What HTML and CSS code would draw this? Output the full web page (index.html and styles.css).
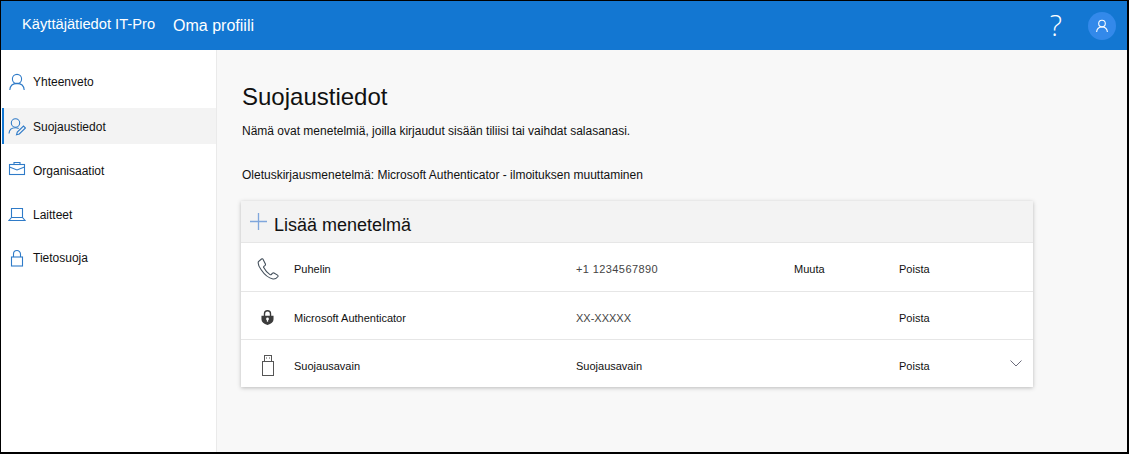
FILE: index.html
```html
<!DOCTYPE html>
<html>
<head>
  <title>Oma profiili</title>
  <link rel="stylesheet" href="styles.css">
</head>
<body>
  <div class="page">
    <header class="topbar">
      <span class="org">Käyttäjätiedot IT-Pro</span>
      <span class="app">Oma profiili</span>
      <span class="help">?</span>
      <span class="avatar">
        <svg width="14" height="14" viewBox="0 0 14 14" fill="none" stroke="#fff" stroke-width="1.1"><circle cx="7" cy="4.6" r="3.3"/><path d="M1.6 13c.3-3 2.4-5 5.4-5s5.100 2 5.400 5"/></svg>
      </span>
    </header>
    <div class="main">
      <nav class="sidebar">
        <a class="nav-item">
          <svg class="nav-icon" width="18" height="18" viewBox="0 0 18 18" fill="none" stroke="#2f7bc8" stroke-width="1.1"><circle cx="9" cy="6" r="4.600"/><path d="M1.800 17c.3-4 3.200-6.600 7.200-6.600s6.900 2.600 7.200 6.600"/></svg>
          <span>Yhteenveto</span>
        </a>
        <a class="nav-item active">
          <svg class="nav-icon" width="18" height="18" viewBox="0 0 18 18" fill="none" stroke="#2f7bc8" stroke-width="1.1"><circle cx="7.500" cy="5" r="4.200"/><path d="M1 15.500c.2-3.300 2.600-5.800 6.500-5.800 1.300 0 2.300.3 3.200.8"/><path d="M8.500 16.800l.8-2.800 6.200-6 2 2-6.200 6z"/></svg>
          <span>Suojaustiedot</span>
        </a>
        <a class="nav-item org-item">
          <svg class="nav-icon" width="18" height="18" viewBox="0 0 18 18" fill="none" stroke="#2f7bc8" stroke-width="1.1"><rect x="1.500" y="2.500" width="15" height="10"/><path d="M6 2.500V.5h6v2M1.500 5l7.500 3 7.500-3"/></svg>
          <span>Organisaatiot</span>
        </a>
        <a class="nav-item">
          <svg class="nav-icon" width="18" height="18" viewBox="0 0 18 18" fill="none" stroke="#2f7bc8" stroke-width="1.1"><path d="M3.500 2.500h11v9h-11zM3.500 11.500L1 14.500h16l-2.500-3"/></svg>
          <span>Laitteet</span>
        </a>
        <a class="nav-item">
          <svg class="nav-icon" width="18" height="18" viewBox="0 0 18 18" fill="none" stroke="#2f7bc8" stroke-width="1.1"><rect x="3.500" y="8" width="11" height="9"/><path d="M5.500 8V5a3.500 3.500 0 0 1 7 0v3"/></svg>
          <span>Tietosuoja</span>
        </a>
      </nav>
      <main class="content">
        <h1>Suojaustiedot</h1>
        <p class="intro">Nämä ovat menetelmiä, joilla kirjaudut sisään tiliisi tai vaihdat salasanasi.</p>
        <p class="default-method">Oletuskirjausmenetelmä: Microsoft Authenticator - ilmoituksen muuttaminen</p>
        <section class="card">
          <div class="add-row">
            <svg class="plus" width="17" height="17" viewBox="0 0 17 17" stroke="#7fa6dc" stroke-width="1.300"><path d="M8.500 0v17M0 8.500h17"/></svg>
            <span>Lisää menetelmä</span>
          </div>
          <div class="method">
            <span class="method-icon">
              <svg width="22" height="22" viewBox="0 0 22 22" fill="none" stroke="#44505c" stroke-width="1.100"><path d="M4.500 1L1.500 3.500C.8 5 1.500 8 4 11.500c3 4.500 7 8.500 12 9.500 2 .3 3.500-.5 5-2.500 .3-.6 0-1-.5-1.400l-3.500-2.100c-.6-.3-1-.2-1.400.2l-1.300 1.300c-.4.4-.8.4-1.300.1-2.500-1.500-5-4.500-6.300-7-.2-.5-.2-.9.2-1.300l1.200-1c.4-.4.5-.8.300-1.300L6 1.300C5.700.7 5 .6 4.500 1z"/></svg>
            </span>
            <span class="method-name">Puhelin</span>
            <span class="method-value number">+1 1234567890</span>
            <span class="method-change">Muuta</span>
            <span class="method-delete">Poista</span>
          </div>
          <div class="method">
            <span class="method-icon">
              <svg width="13" height="15" viewBox="0 0 14 16"><path fill="#3c3c3c" d="M7 0a4 4 0 0 1 4 4v2h2.500v4c0 3-2.500 5-6.500 6-4-1-6.500-3-6.500-6V6H3V4a4 4 0 0 1 4-4zm0 1.500A2.500 2.500 0 0 0 4.500 4v2h5V4A2.500 2.500 0 0 0 7 1.500z"/><circle cx="7" cy="9.500" r="1.500" fill="#fff"/><rect x="6.300" y="10" width="1.400" height="2.500" fill="#fff"/></svg>
            </span>
            <span class="method-name">Microsoft Authenticator</span>
            <span class="method-value code">XX-XXXXX</span>
            <span class="method-change"></span>
            <span class="method-delete">Poista</span>
          </div>
          <div class="method">
            <span class="method-icon">
              <svg width="12" height="21" viewBox="0 0 12 21" fill="none" stroke="#555" stroke-width="1"><rect x="2.500" y=".500" width="7" height="6"/><rect x=".500" y="6.500" width="11" height="14"/><path d="M4 3h1M7 3h1"/></svg>
            </span>
            <span class="method-name">Suojausavain</span>
            <span class="method-value">Suojausavain</span>
            <span class="method-change"></span>
            <span class="method-delete">Poista</span>
            <svg class="chevron" width="12" height="7" viewBox="0 0 12 7" fill="none" stroke="#6c6c7c"><path d="M.500.500L6 6l5.500-5.500"/></svg>
          </div>
        </section>
      </main>
    </div>
  </div>
</body>
</html>
```

FILE: styles.css
```css
html, body {
  height: 100%;
  margin: 0;
}

body {
  font-family: "Liberation Sans", sans-serif;
  font-size: 12px;
  color: #111;
  background-color: #000;
  overflow: hidden;
}

.page {
  height: 451px;
  margin: 1px 2px 2px 1px;
  display: flex;
  flex-direction: column;
  background-color: #f8f8f8;
}

.topbar {
  height: 49px;
  flex-shrink: 0;
  display: flex;
  align-items: center;
  padding-left: 21px;
  background-color: #1377d2;
  color: #fff;
}

.org {
  font-size: 14.7px;
  margin-bottom: 3px;
}

.app {
  font-size: 16px;
  margin-left: 18px;
}

.help {
  margin: 0 0 3px auto;
  font-family: "Open Sans", sans-serif;
  font-size: 29px;
  font-weight: 300;
}

.avatar {
  width: 28px;
  height: 28px;
  margin: 0 11px 0 26px;
  display: flex;
  align-items: center;
  justify-content: center;
  border-radius: 50%;
  background-color: #3389ea;
}

.main {
  flex: 1;
  display: flex;
}

.sidebar {
  width: 215px;
  padding-top: 12px;
  background-color: #fff;
  border-right: 1px solid #eaeaea;
  flex-shrink: 0;
}

.nav-item {
  height: 36px;
  box-sizing: border-box;
  margin-bottom: 7px;
  margin-left: 1px;
  padding: 4px 0 0 4px;
  display: flex;
  align-items: center;
  gap: 7px;
  border-left: 2px solid transparent;
}

.nav-item.active {
  padding-top: 2px;
  background-color: #f3f3f3;
  border-left-color: #1377d2;
  margin-top: 10px;
  margin-bottom: 8px;
}

.nav-item.org-item {
  padding-top: 2px;
}

.content {
  flex: 1;
  padding: 32px 0 0 25px;
}

h1 {
  margin: 0;
  font-size: 24px;
  font-weight: 400;
  line-height: 30px;
}

.intro {
  margin: 12px 0 0;
  line-height: 15px;
}

.default-method {
  margin: 29px 0 0;
  line-height: 15px;
}

.card {
  width: 792px;
  margin-top: 18px;
  margin-left: -1px;
  background-color: #fff;
  box-shadow: 0 1px 4px rgba(0, 0, 0, 0.25);
}

.add-row {
  height: 42px;
  display: flex;
  align-items: center;
  gap: 7px;
  padding: 7px 0 0 9px;
  font-size: 18px;
  box-sizing: border-box;
  background-color: #f3f3f3;
  border-bottom: 1px solid #e6e6e6;
}

.plus {
  margin-bottom: 7px;
}

.method {
  height: 43px;
  padding-top: 4px;
  display: flex;
  align-items: center;
  position: relative;
  font-size: 11px;
  border-bottom: 1px solid #e6e6e6;
}

.add-row + .method {
  height: 44px;
}

.method:last-child {
  border-bottom: none;
}

.method-icon {
  width: 53px;
  display: flex;
  justify-content: center;
  flex-shrink: 0;
}

.method-name {
  width: 282px;
}

.method-value {
  width: 218px;
}

.number {
  letter-spacing: 0.4px;
  color: #444;
}

.code {
  color: #444;
}

.method-change {
  width: 105px;
}

.chevron {
  position: absolute;
  right: 11px;
  top: 20px;
}
```
